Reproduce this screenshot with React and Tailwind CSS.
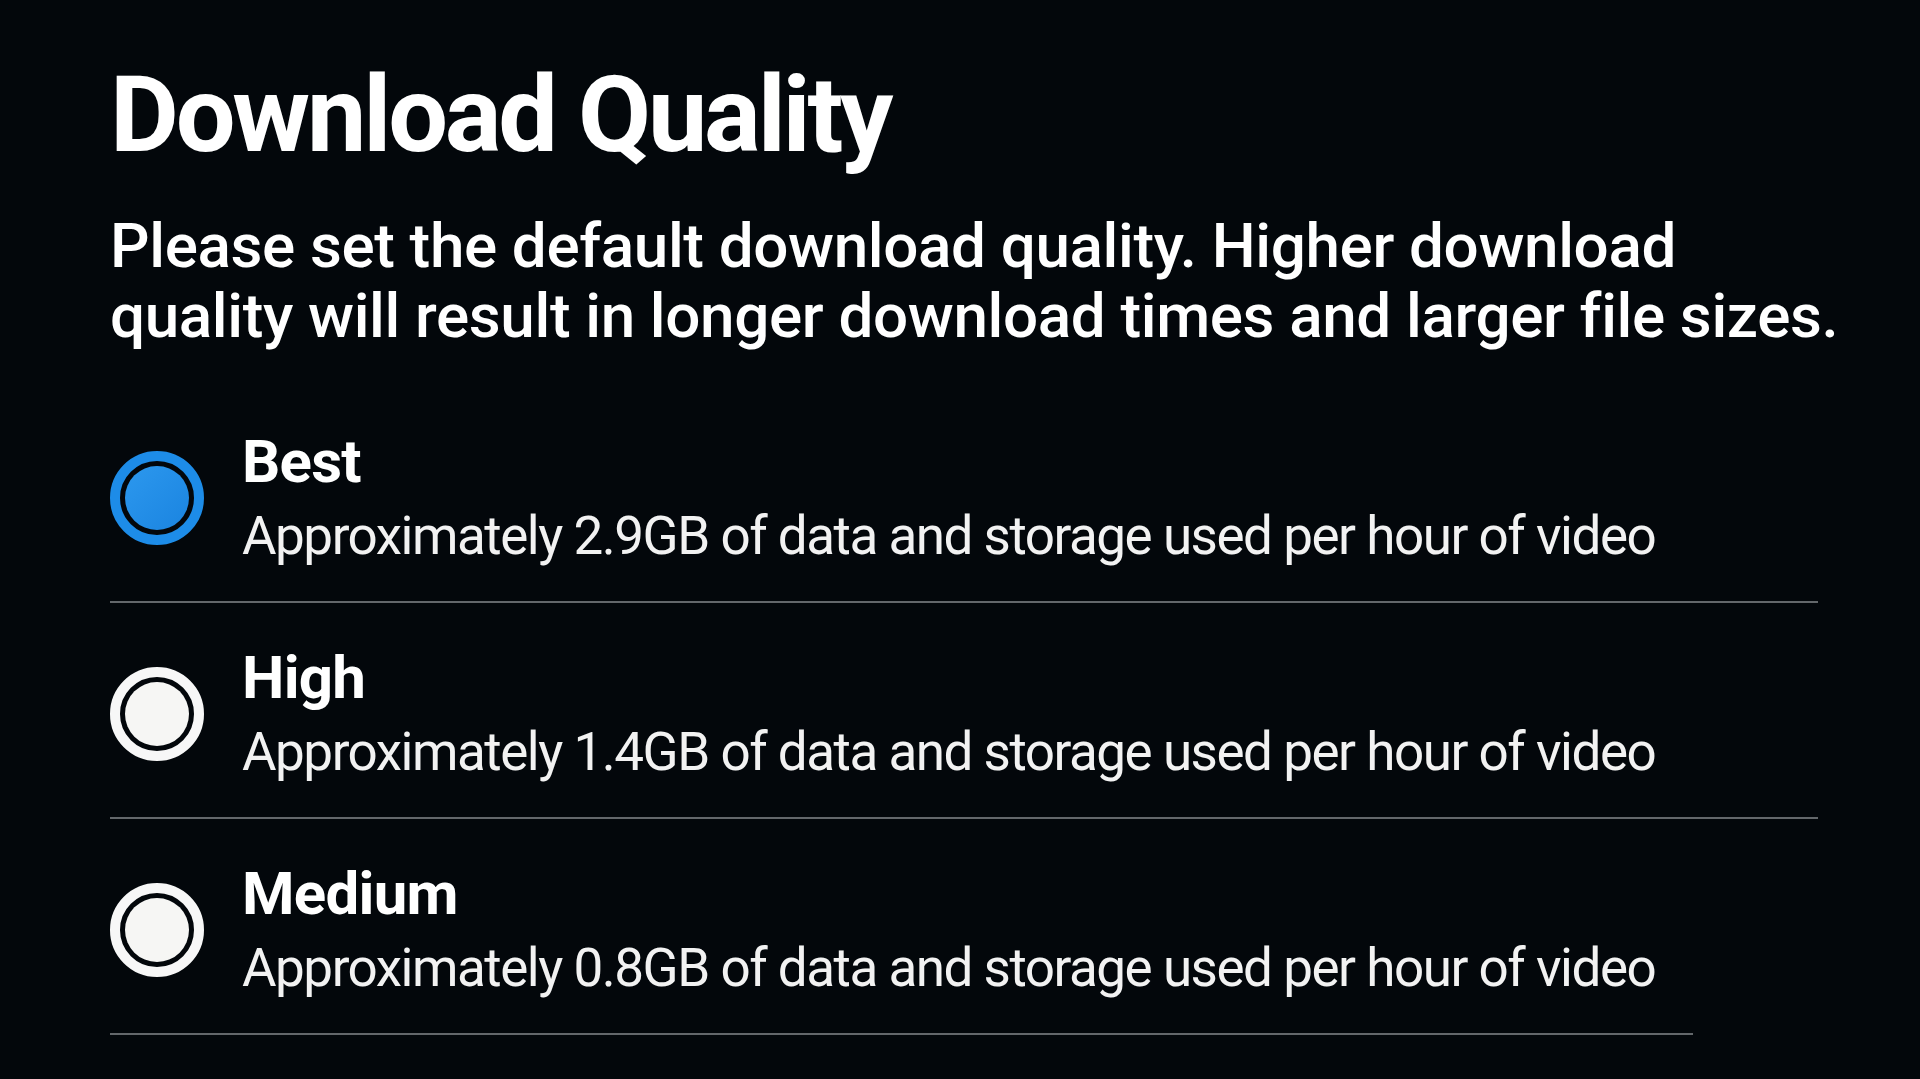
import React from 'react';

const options = [
  { id: 'best', label: 'Best', size: '2.9GB', divider: 'w-[1708px]' },
  { id: 'high', label: 'High', size: '1.4GB', divider: 'w-[1708px]' },
  { id: 'medium', label: 'Medium', size: '0.8GB', divider: 'w-[1583px]' },
];

function Radio({ checked }) {
  return (
    <div
      className={
        checked
          ? 'mt-[64px] w-[94px] h-[94px] shrink-0 rounded-full border-[10px] border-[#1d8ce8] p-[5px]'
          : 'mt-[64px] w-[94px] h-[94px] shrink-0 rounded-full border-[10px] border-[#f7f7f7] p-[5px]'
      }
    >
      <div
        className={
          checked
            ? 'w-full h-full rounded-full bg-gradient-to-br from-[#2c98ee] to-[#1a84e0]'
            : 'w-full h-full rounded-full bg-[#f6f6f4]'
        }
      />
    </div>
  );
}

export default function App() {
  const selected = 'best';

  return (
    <div
      className="w-[1920px] h-[1079px] overflow-hidden bg-[#03070b] text-white pl-[110px] pt-[52px]"
      style={{ fontFamily: 'Roboto, "Noto Sans", sans-serif' }}
    >
      <h1 className="text-[106px] leading-[127px] font-bold tracking-[-0.03em]">Download Quality</h1>

      <p className="mt-[32px] text-[62px] leading-[70px] font-medium tracking-[-0.006em]">
        Please set the default download quality. Higher download
        <br />
        quality will result in longer download times and larger file sizes.
      </p>

      <div className="mt-[36px]">
        {options.map((opt) => (
          <div key={opt.id}>
            <div className="h-[214px] flex items-start gap-[38px]">
              <Radio checked={opt.id === selected} />
              <div className="pt-[40px]">
                <div className="text-[60px] leading-[69px] font-bold tracking-[-0.012em]">{opt.label}</div>
                <div className="text-[53px] leading-[80px] text-[#f2f2f2] tracking-[-0.028em]">
                  Approximately {opt.size} of data and storage used per hour of video
                </div>
              </div>
            </div>
            <div className={'h-[2px] bg-[#63676b] ' + opt.divider} />
          </div>
        ))}
      </div>
    </div>
  );
}
